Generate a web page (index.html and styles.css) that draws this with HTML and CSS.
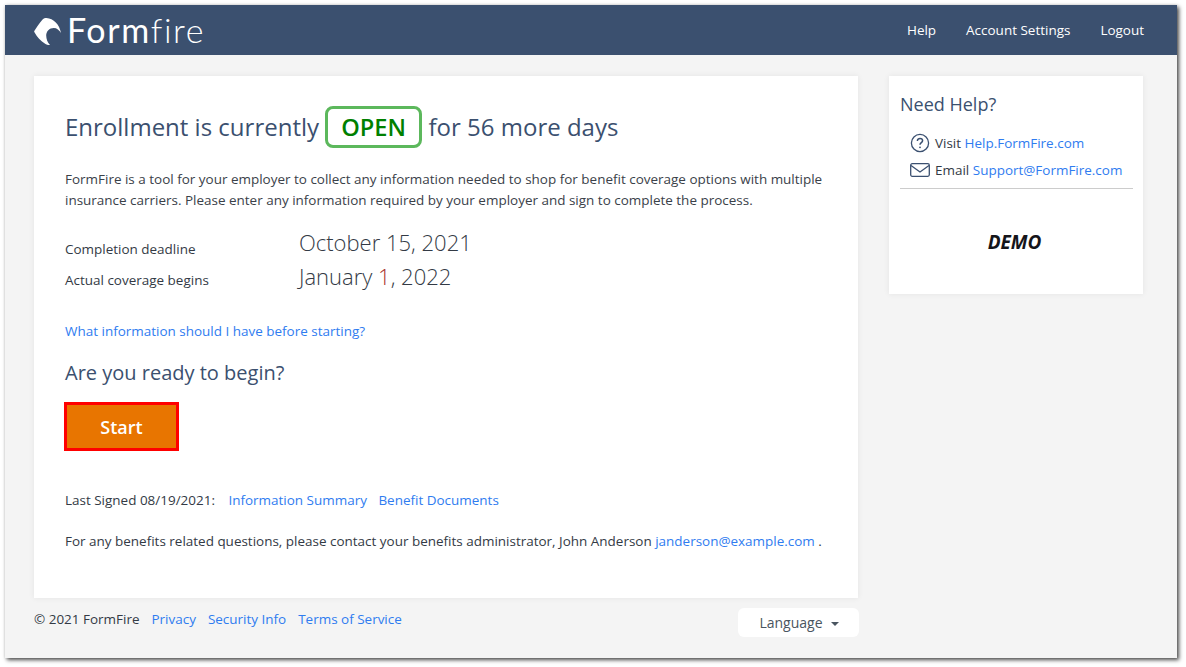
FILE: index.html
```html
<!DOCTYPE html>
<html lang="en">
<head>
<meta charset="utf-8">
<title>FormFire</title>
<link rel="stylesheet" href="styles.css">
</head>
<body>
<div class="window">
  <header class="topbar">
    <div class="brand">
      <svg class="brand-mark" width="27" height="27" viewBox="0 0 27 27"><path fill="#fff" d="M0.3 13C2.5 9.5 5.5 5 8.6 1.5C9.8 0.3 11 0 12.5 0C19.5 0.3 25.5 6.5 27 15C25.3 12 22.8 10 19.8 10C15.3 10 12.2 13.5 12.2 17.5C12.2 21 13.6 24.5 16 27C14.5 27.2 13 26.7 11.5 26C6.5 23 3 19 0.6 14.6C0.2 14 0 13.5 0.3 13Z"/></svg>
      <span class="brand-text"><span class="brand-strong">Form</span><span class="brand-light">fire</span></span>
    </div>
    <nav class="topnav">
      <a href="#">Help</a>
      <a href="#">Account Settings</a>
      <a href="#">Logout</a>
    </nav>
  </header>
  <div class="content">
    <div class="left">
      <main class="card main-card">
        <h1 class="headline">Enrollment is currently <span class="badge">OPEN</span> for 56 more days</h1>
        <p class="intro">FormFire is a tool for your employer to collect any information needed to shop for benefit coverage options with multiple insurance carriers. Please enter any information required by your employer and sign to complete the process.</p>
        <div class="dates">
          <div class="date-row"><span class="date-label label-low">Completion deadline</span><span class="date-value">October 15, 2021</span></div>
          <div class="date-row"><span class="date-label">Actual coverage begins</span><span class="date-value">January <span class="red">1</span>, 2022</span></div>
        </div>
        <p class="info-link"><a href="#">What information should I have before starting?</a></p>
        <h2 class="ready">Are you ready to begin?</h2>
        <button class="start" type="button">Start</button>
        <p class="signed">Last Signed 08/19/2021: <a class="gap-left" href="#">Information Summary</a> <a class="gap-small" href="#">Benefit Documents</a></p>
        <p class="contact">For any benefits related questions, please contact your benefits administrator, John Anderson <a href="#">janderson@example.com</a> .</p>
      </main>
      <footer class="footer">
        <div class="footer-links">
          <span>© 2021 FormFire</span>
          <a href="#">Privacy</a>
          <a href="#">Security Info</a>
          <a href="#">Terms of Service</a>
        </div>
        <button class="language" type="button">Language<span class="caret"></span></button>
      </footer>
    </div>
    <aside class="card side-card">
      <h3 class="side-title">Need Help?</h3>
      <div class="side-row">
        <svg width="20" height="20" viewBox="0 0 20 20" fill="none" stroke="#3b5070" stroke-width="1.3"><circle cx="10" cy="10" r="8.6"/><path d="M7.4 8C7.4 6.4 8.6 5.5 10 5.5C11.5 5.5 12.6 6.4 12.6 7.7C12.6 9.6 10 9.7 10 11.8" stroke-width="1.5"/><circle cx="10" cy="14.3" r="0.9" fill="#3b5070" stroke="none"/></svg>
        <span>Visit <a href="#">Help.FormFire.com</a></span>
      </div>
      <div class="side-row">
        <svg width="20" height="16" viewBox="0 0 20 16" fill="none" stroke="#3b5070" stroke-width="1.3"><rect x="0.7" y="1.7" width="18.6" height="12.6" rx="1.5"/><path d="M1 3.5L10 10L19 3.5"/></svg>
        <span>Email <a href="#">Support@FormFire.com</a></span>
      </div>
      <hr class="side-rule">
      <div class="demo">DEMO</div>
    </aside>
  </div>
</div>
</body>
</html>
```
FILE: styles.css
```css
* { box-sizing: border-box; }
html, body { margin: 0; padding: 0; background: #fff; }
body {
  font-family: "Open Sans", sans-serif;
  font-size: 13.47px;
  color: #333a45;
  height: 667px;
  overflow: hidden;
  padding: 5px 0 0 5px;
}
a { color: #2f7cf0; text-decoration: none; }
.window {
  width: 1172px;
  height: 653px;
  background: #f4f4f4;
  box-shadow: 2px 2px 4px rgba(0,0,0,.7), 0 0 3px rgba(0,0,0,.12);
}
.topbar {
  height: 50px;
  background: #3b506f;
  display: flex;
  align-items: center;
  justify-content: space-between;
  padding: 0 33px 0 29px;
}
.brand { display: flex; align-items: center; gap: 6px; color: #fff; }
.brand-mark { display: block; margin-top: 2px; }
.brand-text { font-family: "Lato", sans-serif; font-size: 34px; letter-spacing: 1.6px; line-height: 40px; }
.brand-strong { font-weight: 400; }
.brand-light { font-weight: 300; }
.topnav { display: flex; gap: 30px; }
.topnav a { color: #fff; }
.content {
  display: flex;
  align-items: flex-start;
  gap: 31px;
  padding: 21px 0 0 29px;
}
.left { width: 824px; }
.card { background: #fff; box-shadow: 0 0 6px rgba(0,0,0,.07); }
.main-card { height: 522px; padding: 30px 31px 0; }
.headline {
  margin: 0;
  font-size: 24px;
  font-weight: 400;
  color: #3b506f;
  line-height: 42px;
  display: flex;
  align-items: center;
  white-space: pre;
}
.badge {
  display: inline-block;
  height: 42px;
  line-height: 36px;
  padding: 0 14px 0 13px;
  width: 97px;
  text-align: center;
  border: 3px solid #5cb85c;
  border-radius: 8px;
  color: #008000;
  font-weight: 600;
  font-size: 23.6px;
}
.intro { margin: 21px 0 0; line-height: 21px; color: #3a4149; }
.dates { margin-top: 14px; }
.date-row { display: flex; align-items: center; height: 34px; }
.date-label { width: 234px; padding-top: 7px; }
.label-low { padding-top: 13px; }
.date-value { font-size: 22px; font-weight: 300; color: #333a45; line-height: 34px; }
.red { color: #a8322c; }
.info-link { margin: 28px 0 0; line-height: 20px; }
.ready { margin: 18px 0 0; font-size: 20px; font-weight: 400; color: #3b506f; line-height: 28px; }
.start {
  display: block;
  margin: 15px 0 0 -1px;
  width: 115px;
  height: 49px;
  background: #e87500;
  border: 3px solid #ff0000;
  color: #fff;
  font-family: inherit;
  font-size: 18px;
  font-weight: 600;
  padding: 0;
}
.signed { margin: 39px 0 0; line-height: 20px; }
.gap-left { margin-left: 10px; }
.gap-small { margin-left: 8px; }
.contact { margin: 21px 0 0; line-height: 20px; }
.footer {
  display: flex;
  align-items: flex-start;
  justify-content: space-between;
  margin-top: 10px;
}
.footer-links { display: flex; gap: 12px; margin-top: 1px; line-height: 20px; }
.language {
  width: 121px;
  height: 29px;
  background: #fff;
  border: 0;
  border-radius: 6px;
  font-family: inherit;
  font-size: 14px;
  color: #4a5560;
  padding: 0 0 0 1px;
  margin-right: -1px;
}
.caret {
  display: inline-block;
  margin-left: 8px;
  vertical-align: 2px;
  border-top: 4px solid #4a5560;
  border-left: 4px solid transparent;
  border-right: 4px solid transparent;
}
.side-card { width: 254px; height: 218px; padding: 15px 10px 0 11px; }
.side-title { margin: 0; font-size: 18px; font-weight: 400; color: #3b506f; line-height: 26px; }
.side-row { display: flex; align-items: center; gap: 5px; padding-left: 10px; height: 27px; }
.side-title + .side-row { margin-top: 12px; }
.side-rule { margin: 5px 0 0; border: 0; border-top: 1px solid #ccc; }
.demo {
  margin-top: 42px;
  padding-right: 4px;
  text-align: center;
  font-size: 19px;
  font-weight: 700;
  font-style: italic;
  color: #15151a;
  line-height: 22px;
}
```
